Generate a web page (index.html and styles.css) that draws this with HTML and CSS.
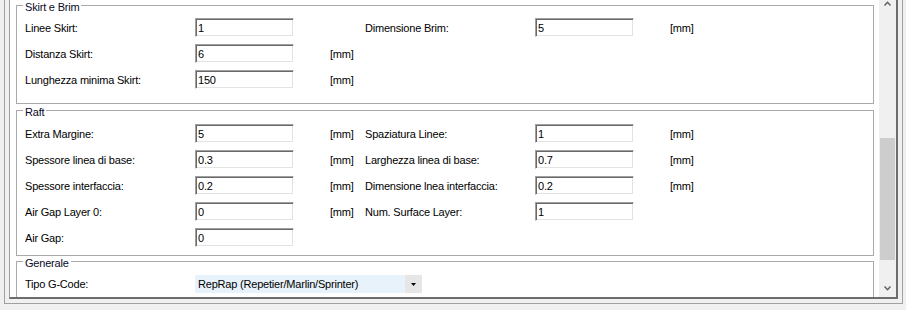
FILE: index.html
```html
<!DOCTYPE html>
<html lang="it">
<head>
    <meta charset="UTF-8">
    <title>Impostazioni Skirt, Brim e Raft</title>
    <link rel="stylesheet" href="styles.css">
</head>
<body>
    <div id="frame">
        <div id="panel">
            <div id="content">
                <fieldset class="group skirt">
                    <legend>Skirt e Brim</legend>
                    <div class="rows">
                        <div class="row">
                            <label>Linee Skirt:</label><span><input class="tb" type="text" value="1"></span><span class="unit"></span>
                            <label>Dimensione Brim:</label><span><input class="tb" type="text" value="5"></span><span class="unit">[mm]</span>
                        </div>
                        <div class="row">
                            <label>Distanza Skirt:</label><span><input class="tb" type="text" value="6"></span><span class="unit">[mm]</span>
                        </div>
                        <div class="row">
                            <label>Lunghezza minima Skirt:</label><span><input class="tb" type="text" value="150"></span><span class="unit">[mm]</span>
                        </div>
                    </div>
                </fieldset>

                <fieldset class="group raft">
                    <legend>Raft</legend>
                    <div class="rows">
                        <div class="row">
                            <label>Extra Margine:</label><span><input class="tb" type="text" value="5"></span><span class="unit">[mm]</span>
                            <label>Spaziatura Linee:</label><span><input class="tb" type="text" value="1"></span><span class="unit">[mm]</span>
                        </div>
                        <div class="row">
                            <label>Spessore linea di base:</label><span><input class="tb" type="text" value="0.3"></span><span class="unit">[mm]</span>
                            <label>Larghezza linea di base:</label><span><input class="tb" type="text" value="0.7"></span><span class="unit">[mm]</span>
                        </div>
                        <div class="row">
                            <label>Spessore interfaccia:</label><span><input class="tb" type="text" value="0.2"></span><span class="unit">[mm]</span>
                            <label>Dimensione lnea interfaccia:</label><span><input class="tb" type="text" value="0.2"></span><span class="unit">[mm]</span>
                        </div>
                        <div class="row">
                            <label>Air Gap Layer 0:</label><span><input class="tb" type="text" value="0"></span><span class="unit">[mm]</span>
                            <label>Num. Surface Layer:</label><span><input class="tb" type="text" value="1"></span>
                        </div>
                        <div class="row">
                            <label>Air Gap:</label><span><input class="tb" type="text" value="0"></span>
                        </div>
                    </div>
                </fieldset>

                <fieldset class="group general">
                    <legend>Generale</legend>
                    <div class="row combo-row">
                        <label>Tipo G-Code:</label>
                        <div class="combo">
                            <span class="combo-text">RepRap (Repetier/Marlin/Sprinter)</span>
                            <span class="combo-drop">
                                <svg width="5" height="3" viewBox="0 0 5 3"><polygon points="0,0 5,0 2.5,3" fill="#000"/></svg>
                            </span>
                        </div>
                    </div>
                </fieldset>
            </div>

            <div id="vscroll">
                <div class="sb-btn sb-up">
                    <svg width="7" height="5" viewBox="0 0 7 5"><polyline points="0.5,4.5 3.5,1.3 6.5,4.5" fill="none" stroke="#606060" stroke-width="1.5"/></svg>
                </div>
                <div class="sb-track"><div class="sb-thumb"></div></div>
                <div class="sb-btn">
                    <svg width="7" height="5" viewBox="0 0 7 5"><polyline points="0.5,0.5 3.5,3.7 6.5,0.5" fill="none" stroke="#606060" stroke-width="1.5"/></svg>
                </div>
            </div>
        </div>
    </div>
</body>
</html>
```

FILE: styles.css
```css
body {
    margin: 0;
    height: 310px;
    overflow: hidden;
    background-color: #f0f0f0;
    font-family: "Liberation Sans", Arial, sans-serif;
    font-size: 11px;
    letter-spacing: -0.2px;
    color: #000;
}

#frame {
    margin-left: 4px;
    width: 899px;
    height: 304px;
    box-sizing: border-box;
    border: 1px solid #a0a0a0;
    border-top: none;
    padding: 0 4px 4px 4px;
}

#panel {
    display: flex;
    height: 299px;
    box-sizing: border-box;
    background-color: #fff;
    border-left: 1px solid #a0a0a0;
    border-right: 2px solid #6d6d6d;
    border-bottom: 2px solid #6d6d6d;
}

#content {
    flex: 1;
    overflow: hidden;
    padding: 0 5px 0 6px;
}

/* group box */
.group {
    margin: 0;
    min-width: 0;
    border: 1px solid #a9a9a9;
    padding: 0 0 0 8px;
}

.group legend {
    margin-left: -2px;
    padding: 5px 2px 0 2px;
    line-height: 13px;
    color: #0a0a28;
}

.skirt {
    margin-top: -4px;
    padding-top: 4px;
    padding-bottom: 14px;
}

.raft {
    margin-top: -3px;
    padding-top: 5px;
    padding-bottom: 8px;
}

.general {
    margin-top: -4px;
    padding-top: 5px;
    padding-bottom: 10px;
}

.rows {
    display: flex;
    flex-direction: column;
    gap: 7px;
}

.row {
    display: grid;
    grid-template-columns: 170px 135px 35px 170px 135px 40px;
    align-items: center;
    height: 19px;
    white-space: nowrap;
}

.combo-row {
    height: 18px;
}

.tb {
    display: block;
    width: 99px;
    height: 19px;
    box-sizing: border-box;
    margin: 0;
    padding: 0 0 0 2px;
    border: 1px solid;
    border-color: #a0a0a0 #fff #fff #a0a0a0;
    box-shadow: inset 1px 1px 0 #696969, inset -1px -1px 0 #e3e3e3;
    background-color: #fff;
    font: inherit;
    letter-spacing: inherit;
    color: #000;
    outline: none;
}

/* combobox */
.combo {
    grid-column: 2 / 5;
    display: flex;
    width: 227px;
    height: 18px;
    background-color: #e8f2fa;
}

.combo-text {
    flex: 1;
    padding-left: 3px;
    line-height: 18px;
}

.combo-drop {
    width: 17px;
    display: flex;
    align-items: center;
    justify-content: center;
    background-color: #e6e6e6;
}

/* scrollbar */
#vscroll {
    width: 17px;
    display: flex;
    flex-direction: column;
    background-color: #f0f0f0;
}

.sb-btn {
    height: 17px;
    flex-shrink: 0;
    display: flex;
    align-items: center;
    justify-content: center;
}

.sb-up {
    margin-top: -5px;
}

.sb-track {
    flex: 1;
}

.sb-thumb {
    margin: 126px 1px 0 1px;
    height: 122px;
    background-color: #cdcdcd;
}
```
